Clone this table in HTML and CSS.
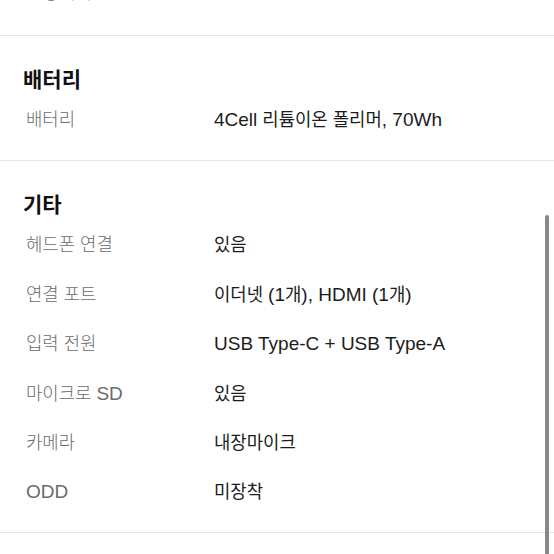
FILE: index.html
```html
<!DOCTYPE html>
<html lang="ko">
<head>
<meta charset="utf-8">
<link rel="stylesheet" href="styles.css">
</head>
<body>
<div class="page">
  <section class="section section-top">
    <div class="row"><span class="label">운영체제</span><span class="value"><span class="en">Free DOS</span></span></div>
  </section>
  <section class="section">
    <h2 class="heading">배터리</h2>
    <div class="row"><span class="label">배터리</span><span class="value"><span class="en">4Cell</span> 리튬이온 폴리머<span class="en">, 70Wh</span></span></div>
  </section>
  <section class="section">
    <h2 class="heading">기타</h2>
    <div class="row"><span class="label">헤드폰 연결</span><span class="value">있음</span></div>
    <div class="row"><span class="label">연결 포트</span><span class="value">이더넷 <span class="en">(1</span>개<span class="en">), HDMI (1</span>개<span class="en">)</span></span></div>
    <div class="row"><span class="label">입력 전원</span><span class="value"><span class="en">USB Type-C + USB Type-A</span></span></div>
    <div class="row"><span class="label">마이크로 <span class="en">SD</span></span><span class="value">있음</span></div>
    <div class="row"><span class="label">카메라</span><span class="value">내장마이크</span></div>
    <div class="row"><span class="label"><span class="en">ODD</span></span><span class="value">미장착</span></div>
  </section>
  <section class="section"></section>
</div>
<div class="scrollbar"></div>
</body>
</html>
```

FILE: styles.css
```css
html, body {
  margin: 0;
  padding: 0;
  background: #ffffff;
  overflow: hidden;
}
body {
  font-family: "Noto Sans CJK KR", sans-serif;
  color: #1c1c1c;
}
.page {
  margin-top: -34px;
}
.section {
  padding: 27px 0 16.7px;
  border-bottom: 1px solid #e6e6e6;
}
.section-top {
  padding-top: 0;
  padding-bottom: 19.6px;
}
.heading {
  margin: 0 0 0.8px;
  padding-left: 23px;
  font-size: 21px;
  line-height: 30px;
  font-weight: 700;
  color: #111111;
}
.row {
  display: grid;
  grid-template-columns: 188px 1fr;
  align-items: center;
  height: 49.4px;
  padding-left: 26px;
  font-size: 17.8px;
  line-height: 24px;
}
.label {
  color: #6a6a6a;
  font-weight: 300;
}
.value {
  color: #1c1c1c;
}
.en {
  font-family: "Liberation Sans", Arial, sans-serif;
  font-size: 19px;
  line-height: 1;
}
.scrollbar {
  position: fixed;
  left: 545px;
  top: 215px;
  width: 4px;
  height: 360px;
  background: #888888;
  border-radius: 2px;
}
```
